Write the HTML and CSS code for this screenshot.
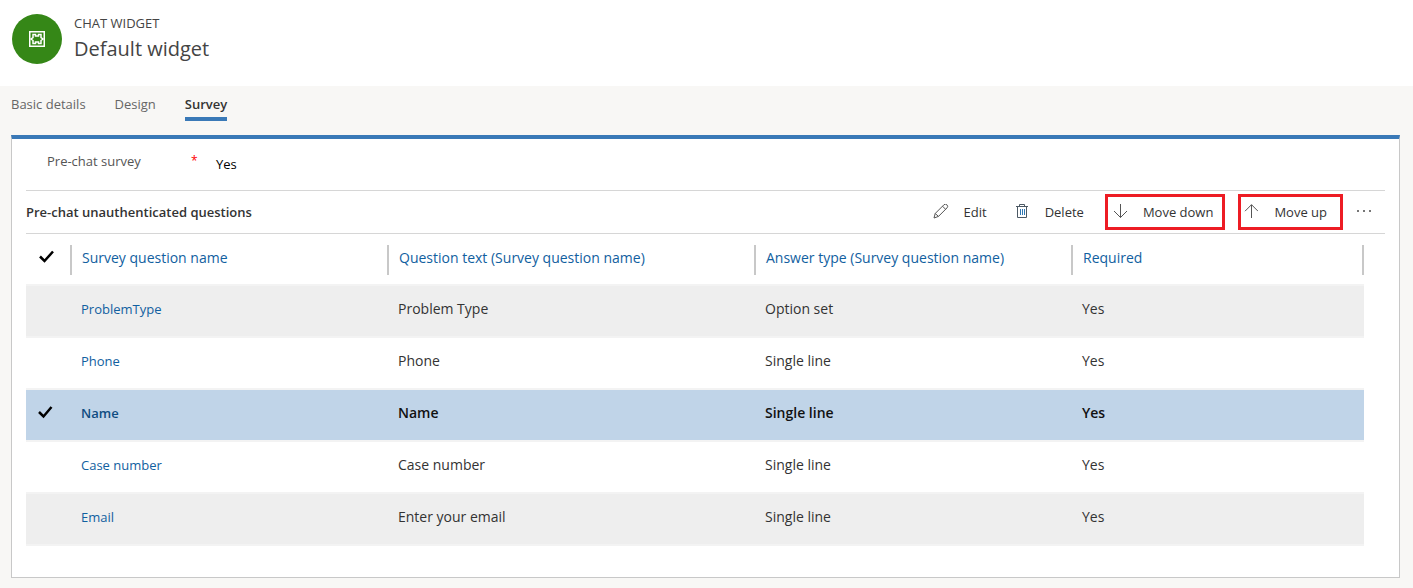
FILE: index.html
```html
<!DOCTYPE html>
<html lang="en">
<head>
<meta charset="utf-8">
<title>Default widget</title>
<link rel="stylesheet" href="styles.css">
</head>
<body>
<header class="page-header">
  <div class="entity-icon">
    <svg width="16" height="16" viewBox="0 0 16 16" fill="none" stroke="#fff" aria-hidden="true">
      <path d="M.75.75h14.5v14.5H.75z" stroke-width="1.5"/>
      <path d="M4 3.500h2.500v1.500h3V3.500H12v3l2 1.500-2 1.500v3H9.500V11h-3v1.500H4v-3L2 8l2-1.500z" stroke-width="1.500"/>
    </svg>
  </div>
  <div>
    <div class="entity-type">CHAT WIDGET</div>
    <h1 class="entity-name">Default widget</h1>
  </div>
</header>
<nav class="tabs">
  <a class="tab" href="#basic">Basic details</a>
  <a class="tab" href="#design">Design</a>
  <a class="tab tab-active" href="#survey" aria-current="page">Survey</a>
</nav>
<main class="panel">
  <div class="field">
    <span class="field-label">Pre-chat survey</span>
    <span class="field-required">*</span>
    <span class="field-value">Yes</span>
  </div>
  <div class="toolbar">
    <h2 class="toolbar-title">Pre-chat unauthenticated questions</h2>
    <button class="command command-edit" type="button">
      <svg width="16" height="16" viewBox="0 0 16 16" fill="none" stroke="#555" aria-hidden="true"><path d="M1 14l1.200-4.500L10.800 .9a1.900 1.900 0 0 1 3.200 3L5.500 12.400zM9.500 2.200L12.500 5.200M2.200 9.500l3.300 2.900"/></svg>
      Edit
    </button>
    <button class="command command-delete" type="button">
      <svg width="16" height="16" viewBox="0 0 16 16" fill="none" stroke="#4c5964" aria-hidden="true"><path d="M2 2.500h12M5.500 2.500v-2h5v2M3.500 2.500v11h9v-11"/><path d="M6.500 5v6M8.500 5v6M10.500 5v6" stroke="#3079b5"/></svg>
      Delete
    </button>
    <button class="command command-marked command-down" type="button">
      <svg width="14" height="16" viewBox="0 0 14 16" fill="none" stroke="#555" aria-hidden="true"><path d="M7.500 0v13.500M1 7l6.500 6.500L14 7"/></svg>
      Move down
    </button>
    <button class="command command-marked command-up" type="button">
      <svg width="14" height="16" viewBox="0 0 14 16" fill="none" stroke="#555" aria-hidden="true"><path d="M7.500 14V.7M1 7.200L7.500 .7 14 7.200"/></svg>
      Move up
    </button>
    <button class="more" type="button" aria-label="More commands">
      <svg width="14" height="4" viewBox="0 0 14 4" fill="#777" aria-hidden="true"><path d="M0 0h2v2H0zM6 0h2v2H6zM12 0h2v2h-2z"/></svg>
    </button>
  </div>
  <table class="grid">
    <colgroup><col class="col-check"><col class="col-name"><col class="col-text"><col class="col-type"><col></colgroup>
    <thead>
      <tr>
        <th class="head-check"><svg class="check" width="16" height="14" viewBox="0 0 16 14" fill="none" stroke="#000" stroke-width="2.500" role="img" aria-label="Select all"><path d="M2 6.500l4.500 4.500L15 1.500"/></svg></th>
        <th><span class="head">Survey question name</span></th>
        <th><span class="head">Question text (Survey question name)</span></th>
        <th><span class="head">Answer type (Survey question name)</span></th>
        <th><span class="head head-last">Required</span></th>
      </tr>
    </thead>
    <tbody>
      <tr class="shaded"><td></td><td><a href="#problemtype">ProblemType</a></td><td>Problem Type</td><td>Option set</td><td>Yes</td></tr>
      <tr><td></td><td><a href="#phone">Phone</a></td><td>Phone</td><td>Single line</td><td>Yes</td></tr>
      <tr class="selected"><td><svg class="check" width="16" height="14" viewBox="0 0 16 14" fill="none" stroke="#000" stroke-width="2.500" role="img" aria-label="Selected"><path d="M1 6l4.500 4.500L13.500 1"/></svg></td><td><a href="#name">Name</a></td><td>Name</td><td>Single line</td><td>Yes</td></tr>
      <tr><td></td><td><a href="#casenumber">Case number</a></td><td>Case number</td><td>Single line</td><td>Yes</td></tr>
      <tr class="shaded"><td></td><td><a href="#email">Email</a></td><td>Enter your email</td><td>Single line</td><td>Yes</td></tr>
    </tbody>
  </table>
</main>
</body>
</html>
```
FILE: styles.css
```css
* { box-sizing: border-box; }
body {
  margin: 0;
  background: #f8f7f5;
  color: #333;
  font: 13px/18px "Open Sans", "Noto Sans", sans-serif;
}
a { text-decoration: none; }
.page-header {
  display: flex;
  gap: 12px;
  padding: 14px 12px 22px;
  background: #fff;
}
.entity-icon {
  display: flex;
  align-items: center;
  justify-content: center;
  width: 50px;
  height: 50px;
  border-radius: 50%;
  background: #358717;
}
.entity-type { color: #444; }
.entity-name {
  margin: 3px 0 0;
  font-size: 20px;
  line-height: 28px;
  font-weight: 400;
  color: #444;
}
.tabs {
  display: flex;
  gap: 29px;
  padding: 9px 11px 14px;
}
.tab {
  padding-bottom: 4px;
  border-bottom: 4px solid transparent;
  color: #666;
}
.tab-active {
  border-color: #3a79b7;
  color: #333;
  font-weight: 600;
}
.panel {
  margin: 0 13px 10px 11px;
  padding: 0 14px 31px;
  border: 1px solid #c8c8c8;
  border-top: 4px solid #3a79b7;
  background: #fff;
}
.field {
  display: flex;
  padding: 13px 21px 17px;
  border-bottom: 1px solid #d6d6d6;
}
.field-label {
  width: 144px;
  color: #555;
}
.field-required {
  width: 25px;
  color: #f00;
  font-size: 12px;
}
.field-value {
  padding-top: 3px;
  color: #000;
  font-weight: 500;
}
.toolbar {
  display: flex;
  align-items: center;
  height: 43px;
  border-bottom: 1px solid #d6d6d6;
}
.toolbar-title {
  flex: 1;
  margin: 0;
  font-size: 13px;
  font-weight: 600;
}
.command {
  display: flex;
  align-items: center;
  gap: 15px;
  padding: 0;
  border: 0;
  background: none;
  color: #333;
  font: inherit;
  white-space: nowrap;
}
.command-edit { margin-right: 27px; }
.command-delete { margin-right: 21px; }
.command-marked {
  gap: 16px;
  height: 36px;
  border: 3px solid #ed1c24;
}
.command-down {
  margin-right: 13px;
  padding: 0 9px 0 5px;
}
.command-up { padding: 0 13px 0 3px; }
.more {
  display: flex;
  margin: 0 14px;
  padding: 0;
  border: 0;
  background: none;
}
.grid {
  width: calc(100% - 21px);
  table-layout: fixed;
  border-collapse: collapse;
  font-size: 14px;
}
.col-check { width: 44px; }
.col-name, .col-type { width: 317px; }
.col-text { width: 367px; }
.grid th {
  height: 51px;
  padding: 2px 0 0;
  color: #1160a0;
  font-weight: 400;
  text-align: left;
}
.grid .head-check { padding: 0 0 4px; }
.head {
  display: block;
  height: 30px;
  padding-left: 10px;
  border-left: 2px solid #c8c8c8;
  line-height: 26px;
}
.head-last { border-right: 2px solid #c8c8c8; }
.check {
  display: block;
  margin-left: 12px;
}
.grid td {
  height: 52px;
  padding: 0 0 4px 11px;
  border-top: 2px solid #f3f3f3;
  border-bottom: 2px solid #f3f3f3;
}
.grid td:first-child { padding-left: 0; }
.grid td a {
  color: #1160a0;
  font-size: 13px;
}
.shaded { background: #eee; }
.selected {
  background: #c0d4e8;
  color: #111;
  font-weight: 600;
}
.selected a { font-weight: 600; }
.grid .selected a { color: #0f4c81; }
```
